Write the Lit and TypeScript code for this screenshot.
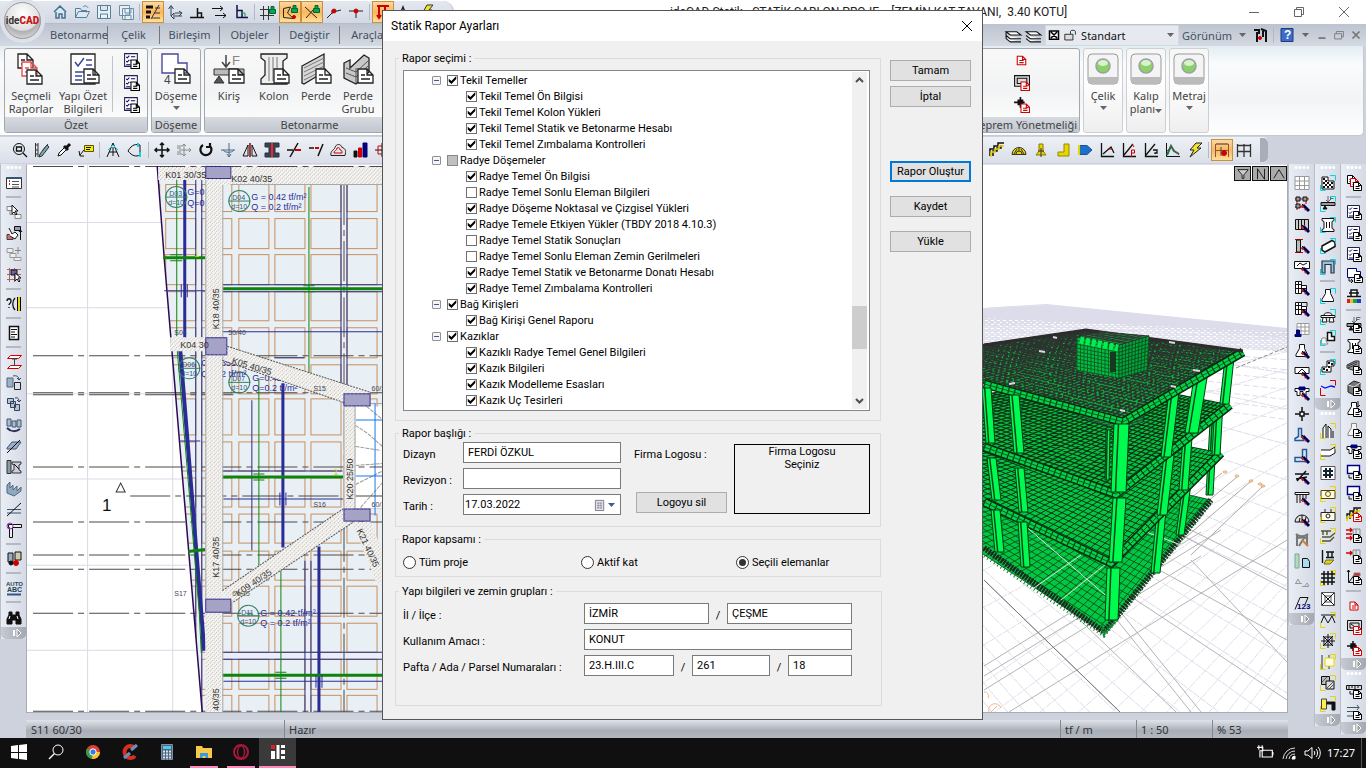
import { LitElement, html, svg, css } from "lit";
import { customElement, state } from "lit/decorators.js";
import { classMap } from "lit/directives/class-map.js";

type Part = unknown;

/* ---------- drawing helpers ---------- */
const P = (d: string, s = "#222", f = "none", w = 1): Part =>
  svg`<path d=${d} stroke=${s} fill=${f} stroke-width=${w}></path>`;
const C = (x: number, y: number, r: number, s = "#222", f = "none", w = 1): Part =>
  svg`<circle cx=${x} cy=${y} r=${r} stroke=${s} fill=${f} stroke-width=${w}></circle>`;
const T = (x: number, y: number, t: string, size: number, c = "#333", rot = 0, w = 400): Part =>
  svg`<text x=${x} y=${y} font-size=${size} fill=${c} font-weight=${w} font-family="Liberation Sans, sans-serif" transform=${`rotate(${rot} ${x} ${y})`}>${t}</text>`;

const glyph = (parts: Part, size = 16, box = 16) =>
  html`<svg class="glyph" width=${size} height=${size} viewBox=${`0 0 ${box} ${box}`} aria-hidden="true">${parts}</svg>`;

const page = (x: number, y: number, c = "#000", k = 1): Part =>
  P(`M${x} ${y}h${5 * k}l${3 * k} ${3 * k}v${5 * k}h${-8 * k}zM${x + 5 * k} ${y}v${3 * k}h${3 * k}M${x + 2 * k} ${y + 4 * k}h${4 * k}M${x + 2 * k} ${y + 6 * k}h${4 * k}`, c, "#fff");
const brush: Part = [P("M9 9l6 6", "#00007a", "none", 3), P("M7.5 9.5l2 2M11 13l1 1", "#c01818", "none", 2), P("M8 8l7 7", "#000")];
const corner = (c: string): Part => P("M10 .5h5.5v5M.5 10v5.5h5", c);
const tri = (c = "#666") => html`<svg class="tri" width="7" height="4" viewBox="0 0 7 4" aria-hidden="true"><path d="M0 0h7l-3.5 4z" fill=${c}></path></svg>`;

const K = "#00007a", B = "#111", G = "#888", R = "#d00000", Y = "#e8d400", CY = "#00d8e8";

/* ---------- quick access ---------- */
const quick: Record<string, Part> = {
  "Ana sayfa": [P("M2 8l6-6 6 6M4 8v6h3v-4h3v4h3V8", "#46708c", "#d8e8f2", 1.5)],
  "Aç": [P("M1.5 13.5v-9h5l1 2h5v2M1.5 13.5l3-6h11l-3 6zM9 3c2-2 4-1 5 1", "#54809c", "#dce9f2")],
  "Kaydet": [P("M1.5 1.5h13v13h-13zM4.500 1.500v5h7v-5M4.500 14v-4h7v4", "#54809c", "#e8f1f6")],
  "Tümünü kaydet": [P("M1.500 1.500h10v10h-10zM4.500 4.500h11v11h-11zM7 5v4h6v-4M7 15v-4h6v4", "#6c8fa8", "#e8f1f6")],
  "Çizgi": [P("M1 3h7M1 8h5M1 13h4", "#111", "none", 3), P("M14 1L6 15M10 4h5M9 9h6M7 14h8", "#333")],
  "Seçim": [P("M4 2v10M1.500 5L4 1.500 6.500 5M4 12l3-3v6zM8 9h7M8 12h7M12 7l3 2-3 3", "#345", "#cde")],
  "Dik": [P("M1 13.500h14M8.500 13V4M8.500 9h4v4", "#111", "none", 1.5)],
  "Paralel": [P("M1 4.500h10M4 11.500h11M9 2l3 2.500L9 7M12 9l3 2.500-3 2.500", "#111")],
  "Köşe": [P("M4 1v12.500h11M4 6.500h5v7", "#114", "none", 1.5), P("M8 9h4v4", "#00a050")],
  "Izgara": [P("M3.500 2v14M8.500 2v14M0 5.500h12M0 11.500h14", "#333"), P("M9.500 5.500h6v4h-6zM11 5V2.500h3V5", "#063", "#0a5")],
  "Kilit": [P("M1.500 4.500l7-1.500-3 6 6 5.500-10-1z", "#222"), P("M9.500 4.500h6v4h-6zM11 4V1.500h3V4", "#063", "#0a5"), C(12, 13, 1.5, R, R)],
  "Kesişim": [P("M1 3l12 11M2 14l8-9", "#222"), P("M9.500 4.500h6v4h-6zM11 4V1.500h3V4", "#063", "#0a5")],
  "Uç": [P("M1 14l6-6 8-2M6 6v4", "#222"), C(8, 7, 2, R, R)],
  "Orta": [P("M1 7h14M8 7v7", "#222"), C(8, 7, 2, R, R)],
  "Yük": [P("M2 2h12M4 2v12M10 2v10M2 11l2 3 2-3M8 9l2 3 2-3", R, "none", 2)],
  "Ölçü": [P("M2 13L6 3l4 10M4 9h4M11 12h4", "#222", "none", 1.5)],
  "Şimşek": [P("M8 1h6l-4 5h3L4 15l3-7H4z", "#333", "#f2e230")],
};

/* ---------- drawing toolbar ---------- */
const toolsLeft: (Part | null)[] = [
  [C(7, 7, 5.500, B), P("M4.500 5h5v4h-5zM11 11l4 4", B, "none", 1.3)],
  [P("M1.500 1v14M4 1v14M1 3h3M1 8h3M1 12h3M14 2L8 9", "#333"), P("M13 3L6 12l-1 3 3-1 7-9z", "#333", "#7aa")],
  [P("M2 14l1-3 6-6 2 2-6 6z", B, "#fff"), P("M8 4l4 4M10 6l4-4", B, "none", 3)],
  [P("M6.500 3.500h9v6h-9z", "#550", "#ffee00"), P("M6 8L2 13M1 9l1 5h4M8 5.500h5M8 7.500h4", B)],
  null,
  [P("M8 1L2 15M8 1l6 14M4 10h8M8 5v9", B), P("M3 8l5-5 5 5", CY)],
  [P("M1 9C5 2 9 2 13 3M1 9c4 5 8 6 12 4M13 3v10", B), P("M11 1v4M13 10v5", CY, "none", 2)],
  null,
  [P("M8 1v14M1 8h14M6 3l2-2 2 2M6 13l2 2 2-2M3 6L1 8l2 2M13 6l2 2-2 2", B, "none", 1.5)],
  [P("M8 2v12M3 8h12M6 4l2-2 2 2M6 12l2 2 2-2M13 6l2 2-2 2M1 4h5M1 6h4M1 10h4M1 12h5", G)],
  [P("M5 3a5.500 5.500 0 107 1M12 1v4H8", B, "none", 2.2)],
  [P("M1 8h14M9 1v14M3 8a6 4 0 0011 0M7 12l2 3 2-3", "#4a6a86")],
  [P("M8 1v14M6 3v11H1zM10 3v11h5z", B), P("M8 1v14", R)],
  [P("M1 1h14v4h-4v6h4v4H1v-4h4V5H1z", "#234", "#345"), P("M8 1v14", "#ff2020", "none", 2)],
  [P("M1 8h6M4 15L12 1", B, "none", 1.5), P("M9 8h6", R, "none", 2)],
  [P("M1 6h5M10 14L15 2", B, "none", 1.5), P("M7 6h4", R, "none", 2)],
  [P("M1 13.500c-1-5 3-5 4-8 1-4 6-4 7 0 4 1 4 4 3 8z", "#222"), P("M4 11c0-3 3-2 3-5 2-1 3 0 3 2 2 0 2 1 2 3z", R)],
  [P("M2 9h3v6H2z", B, B), P("M6.500 6h3v9h-3z", R, R), P("M11 1h4v14h-4z", K, K)],
  [P("M1 8h14M8 1v14", B), P("M4 4h8v8H4z", R)],
];
const toolsRight: (Part | null)[] = [
  [P("M1 14V7h4V4h4V1h6M4 14V9h4V6h4V3", "#111", "none", 1.5), P("M2 15v-5h4V7h4V4h5", Y, "none", 1.5)],
  [P("M1 12.500a7 7 0 0114 0z", "#333", Y), P("M5 12a3 3 0 016 0M3 12l3-5M8 5v4M13 12l-3-5", "#333")],
  [P("M6 2h4v7l3 4H3l3-4z", "#887700", Y), P("M8 6v9M5 9h6", "#333")],
  [P("M9 2h5v12H3v-4h6z", "#998800", Y)],
  [P("M2 3.500h8l5 4.500-5 4.500H2z", "#1850a0", "#1c70c8"), P("M2 3v10", Y, "none", 2)],
  [P("M2.500 1v13.500H15M4 12L12 5l3 6", B, "none", 1.3), P("M9 7h4", R)],
  [P("M2.500 1v13.500H15M3 13L12 2", B, "none", 1.3), P("M11 2l2 3M10.500 15V8h3v3h-3", R)],
  [P("M2.500 1v13.500H15M3 13L12 2M10 8h4v3h-2v1M12 14v1", B, "none", 1.3)],
  [P("M1.500 1v13.500H15", B), P("M2 13l4-9 3 5 5 3", "#0a7a50", "none", 2), P("M2 9l4-4 8 8", "#b03030")],
  [P("M9 1h6l-5 5h4L3 15l4-7H3z", "#222", "#f2e230")],
  null,
  [P("M1.500 2v13M14.500 2v13M1 8.500h14", "#854"), P("M2 2h12", "#333", "none", 1), C(10, 11, 2.500, R, R), P("M7 5v9", "#444")],
  [P("M1.500 2v13M14.500 2v13M8 2v13M1 3.500h14M1 9.500h14", "#333", "none", 1.3)],
];

/* ---------- vertical toolbars ---------- */
const SEP = null, CAP = "cap", GRIP = "grip";
type Item = Part | null | "cap" | "grip";
const table: Part = P("M1.500 1.500h6v12h-6zM7.500 5.500h5v6h-5M1 4.500h7M1 8.500h12M4.500 1v13", B, "#fff");
const foot: Part = P("M5.500 1.500h5v4l3 6v2H2v-2l3.500-6z", B, "#fff");
const slab: Part = [P("M1 3.500h14v3H12v4h-3v-4H6v4H3v-4H1z", B, "#fff"), P("M5 2h6v3H5z", K, K)];
const list: Part = [P("M1.500 1.500h12v12h-12z", "#224", "#fff"), P("M3 4.500l1 1 2-2M7.500 4.500h4M3 8.500l1 1 2-2M7 8h4M3 12h4", K)];
const check: Part = [P("M2 10V2h6v4h6v8H2z", B, "#fff"), P("M3 3h2v2H3zM5 5h2v2H5zM3 7h2v2H3zM7 7h2v2H7zM5 9h2v2H5zM9 9h2v2H9zM11 7h2v2h-2zM7 11h2v2H7zM3 11h2v2H3zM11 11h2v2h-2z", "none", B)];
const beamF: Part = [P("M8 0v6M6 4l2 2 2-2M10.500 4V.5h4M10.500 2.500h3", "#666"), P("M1 6.500h14v3H1z", B, "#999"), P("M3 13l2-3 2 3z", B, B)];
const colI: Part = P("M2 1.500h12v2l-2 1v7l2 1v2H2v-2l2-1v-7l-2-1zM6.500 5v6M9.500 5v6", B, "#fff");

const colLeft: Item[] = [
  [P("M.5 2.500h15v11H.5z", "#333", "#fff"), P("M1 3h14", "#357", "none", 2), P("M6 6.500h7M6 9.500h7M6 12h7", "#555"), P("M3 6h1M3 9h1", "#d22", "none", 2)],
  SEP,
  [P("M1 2.500h6v4H1zM4 6.500h6v4H4zM9 10.500h6v4H9z", G, "#f4f4f4"), P("M6 1v9l2-2 2 3 1-1-2-3h3z", B, "#fff")],
  [P("M8.500 1.500h6v4h-6z", B, "#99b"), P("M1 9.500h6v5H1z", "#533", "#b77"), P("M3 3l3 6 3-2 3 3-3 4-5-3", B, "#fff"), P("M14.500 5v10M13 7l1.500-2L16 7", B)],
  [P("M1 2.500h6v4H1zM4 7.500h6v4H4zM8 11.500h7v3H8z", "#999", "#eee"), P("M12 1v7M9 4.500h6", "#888")],
  [P("M1 2.500h14M1 7.500h14M1 12.500h10M3.500 1v14M8.500 1v14", "#a66"), P("M5 3h6v5H5z", B, "#66a"), P("M9 6v8l2-2 2 3 1-1-2-3h3z", B, "#fff")],
  SEP,
  [P("M1 5c0-3 4-3 4 0s-2 2-2 4M3 11v1M9 2c-3 3-3 9 0 12", B, "none", 1.3), P("M13 1v14", "#000", "none", 4), P("M13 1v14", Y, "none", 2)],
  SEP,
  [P("M3.500 1.500h9v13h-9z", B, "#fff", 1.5), P("M5 4.500h6M5 7h4M5 9.500h6M5 12h4", B)],
  SEP,
  [P("M4.500 1.500h11l-3 3h-11zM4.500 11.500h11l-3 3h-11z", R, "#fff"), P("M8.500 4v8M6.500 6l2-2 2 2", "#345")],
  [P("M1 3h6v9H1z", "#567", "#9bb0cc"), P("M8.500 7.500h6v7h-6z", "#222"), P("M7 1c4-1 6 1 6 4M11 3l2 2 2-2", "#346")],
  [P("M1.500 2.500h6v5h-6zM4.500 5.500h5v6h-5zM8.500 8.500h5v6h-5z", "#345", "#b4c4dc"), P("M9 2c3-1 4 1 4 4M11 4l2 2 2-2", "#346")],
  [P("M1 2h4v7H1zM6 4h4v6H6zM11 3h4v7h-4z", "#456", "#a8bcd6"), P("M1 11c4 4 9 4 13 1", "#235", "none", 2)],
  [P("M1 10l5-6h9l-5 7H1z", "#456", "#9bb0cc"), P("M1 15L14 2", B)],
  [P("M1 1.500h4v13H1z", "#333", "#89a"), P("M6 3h9v2l-2 1v5l2 1v2H6v-2l2-1V6L6 5z", "#333", "#ccd"), P("M8 5l5 5", B)],
  [P("M1 5l3-3v6l3-3v5l4-4v5l4-4v4l-7 5-7-3z", "#567", "#8ea8c0")],
  [P("M1 8.500h14M1 12h14", "#357"), P("M1 15L15 2", B)],
  [P("M2.500 2.500h13v3h-9v10h-3v-10h-1z", B, "#eee"), C(4, 4, 3, "#93b")],
  SEP,
  [P("M2 2h5v9H2z", B, "#9ab"), P("M9 1h6v8H9z", B, "#cca"), C(10, 12, 2.500, R, R), C(5, 12, 2, B, B)],
  SEP,
  [T(0, 6, "AUTO", 6, "#245", 0, 700), T(1, 12, "ABC", 7, "#245", 0, 700), P("M1 14.500h14", "#358", "none", 2)],
  SEP,
  [P("M3 3h3v3h4V3h3v3l2 4v5h-5v-4H6v4H1v-5l2-4z", B, B), P("M4 7L3 10M11 7l1 3", "#fff")],
  CAP,
];
const colA: Item[] = [
  P("M1 1.500h14v13H1zM1 6h14M1 10.500h14M5.500 1v14M10.500 1v14", "#999", "#fff"),
  [P("M1 3h14M1 11h8M3 1v13M12 1v7", R), P("M2 1h4v4H2zM9 1h4v4H9zM2 8h4v4H2z", B, "#999"), brush],
  [P("M1.500 2.500h13v10h-13z", B, "#ccc"), P("M4.500 3v9M7.500 3v9M10.500 3v5", B), brush],
  [P("M1 1.500h8M1 14.500h8", R), P("M2.500 2v12h4V2z", B, "#bbb"), brush],
  [P("M.5 2.500h15v7H.5z", B, "#fff"), P("M3 7l3-3 3 2 4-2", B), brush],
  [table, brush],
  [table, P("M8 1.500h5v4", B), brush],
  [P("M3 1.500h12v11H3zM3 5h12M3 9h12M7 1v12M11 1v12", "#999", "#fff"), P("M1 14.500v-2h1.500V8h3v4.500H7v2z", K, K)],
  [foot, brush],
  [P("M1 3.500h14v6H1z", B, "#fff"), P("M4 9l4-4 4 4", B), brush],
  [slab, brush],
  [P("M8 1v5M8 10v5M1 8h5M10 8h5M6 6h4v4H6z", B, "#fff", 1.5)],
  [P("M4.500 1.500h3v8l2 2v2H1v-2l3.500-2z", "#245a9a", "#dce8f6", 1.5), brush],
  [P("M8.500 1.500h4v12H1v-4h7.500z", "#245a9a", "#dce8f6", 1.5), brush],
  [P("M1 5h14M3 12L12 2M2 10l11-2", B, "none", 1.5), brush],
  [P("M1 2.500h14v2H1zM3 4v9M6 4v9M9 4v7M12 4v5", B, "#fff"), brush],
  [P("M1 11a7 7 0 0114 0zM5 11l1-4M8 10V4M11 11l1-5", B, "#ddd"), brush],
  [P("M2 2c3 3 9 3 12 0M2 7c3-2 9-2 12 0M3 2v12M13 2v12M5 14l5-8", "#777", "none", 2), P("M8 8l6 6", "#d08030", "none", 2)],
  [P("M1 1h4v14H1z", "#7a9", "#b8d8bc"), P("M8.500 5.500h5l2 3v6h-7z", B, "#a8dcf4")],
  [P("M1 9.500h7M8 12.500h7M2 9l2-4 2 4M11 12l2-3 2 3", "#999")],
  [P("M1 14.500L6 2.500h8l-3 7", B), T(3, 14, "123", 8, K, 0, 700)],
  CAP,
];
const colB: Item[] = [
  [check, corner(CY)], [beamF, corner(CY)], [colI, corner(CY)],
  [P("M2 8l10-5.500 3 2v4L5 14l-3-2z", B, "#fff", 1.5), corner(CY)],
  [P("M2 14V2h12v12h-3V5.500H5V14z", "#234", "#9cc0dc", 1.2), corner(CY)],
  SEP,
  [foot, corner(CY)],
  [P("M1 6.500h14v2H1zM4 6c0-3 8-3 8 0M3 9l-1 4h5l-1-4M10 9l-1 4h5l-1-4", B, "#fff"), corner(CY)],
  [P("M2 8h4v3l2 3H1z", G, "#fff"), P("M7.500 2.500h4v4h3v4h-7z", B, "#fff", 1.500), corner(CY)],
  SEP,
  [P("M2 8h5V2h7v5h-3v6H2z", B, "#fff"), P("M3 9h2v2H3zM8 3h2v2H8zM11 4h2v2h-2zM6 10h2v2H6zM8 7h2v2H8z", "none", B), corner(CY)],
  [P("M1 6l4 2 6-2 4 1", "#0010ff", "none", 1.3), P("M10 .5h5.500v5M.5 8v7.500h5", R)],
  CAP, GRIP,
  [P("M3 15V5l3-4v14M8 15V3l3 3v9M13 15V8", B, "#fff"), corner(Y)],
  [P("M1 6h9l5-3v6l-5 3H1", B, "#fff"), corner(Y)],
  [P("M1 1.500h14v13H1z", "#555", "#fff"), P("M6 3v10M10 3v10M3 6h10M3 10h10", "#123", "none", 2)],
  [P("M1 4.500h14v8H1z", "#554400", "#fffbe0"), C(8, 8, 2.500, "#665500"), corner(Y)],
  [P("M1 5.500h14v8H1zM5 5V2M11 5V2", "#222", "#fffbe0"), C(8, 9, 2, "#222"), corner(Y)],
  [P("M1 3h10M3 3v4M7 3v4M2 9h8l5-4M2 13h8l4-4", "#553", "none", 1.4), corner(Y)],
  [P("M2.500 1v13M6 3h8M8 3v5M12 3v5M6 8.500h8", B, "none", 1.4), P("M6 11h8l-4 4H4z", "#664", Y)],
  [P("M1 4h14M1 8h14M1 12h14M4 1v14M8 1v14M12 1v14", B, "none", 1.5), corner(Y)],
  [P("M1.500 1.500h13v13h-13zM5 5h6v6H5z", "#555", "#fff"), P("M2 2l12 12M14 2L2 14", B)],
  [P("M1 11l3-7 4 7 4-7 3 7M1 3h14", B), corner(Y)],
  [P("M1 8h14M8 1v14M3 3l10 10M13 3L3 13M4 4h8v8H4z", B), corner(Y)],
  [P("M2 1v14M9 1v3M9 12v3", "#333"), P("M5 4h9v8H5z", Y, "#ffffe8"), corner(Y)],
  [P("M1.500 1.500h8v8h-8z", B, "#bbb"), P("M6 6h8v8H6z", B, "#ddd"), P("M2 7l5-5M7 13l6-6M9 14l5-5", "#555"), corner(Y)],
  [P("M1.500 3h5v10h-5z", "#443", "#ffee50"), P("M7 6h8v8h-3V8H7z", B, B), corner(Y)],
  CAP,
];
const colC: Item[] = [
  [page(1.500, 0.500), page(4.500, 3.500, R), page(7.500, 7.500)],
  SEP,
  [list, page(7.500, 7.500)], [list, page(7.500, 7.500)], [list, page(7.500, 7.500)],
  [P("M1.500 1.500h9v3h4v6H1.500z", K, "#fff"), P("M3 11v3h3M5 12l2 2-2 2", B), page(8.500, 7.500)],
  [P("M1 8.500h14M5 8V2h6v6M3 5h10", B, "#fff", 1.5), P("M1 13h3", "#e02020", "none", 4), P("M4 13h3", "#e8c020", "none", 4), P("M7 13h4", "#20a040", "none", 4), P("M11 13h4", "#2040c0", "none", 4)],
  SEP,
  [beamF, page(7.500, 7.500)], [colI, page(7.500, 7.500)],
  [P("M1 6l8-4h4v8l-4 2-8-3z", "#333", "#999"), P("M2 7l9-4M2 9l9-4", "#333"), page(7.500, 7.500)],
  [P("M2 5l6-4 6 2v9l-6 3-6-3z", "#222", "#777"), P("M2 5l6 2 6-4M8 7v7", "#ddd"), page(7.500, 7.500)],
  [foot, P("M12 0v6M10 4l2 2 2-2", B), page(7.500, 7.500)],
  [P("M5.500 1.500h5v4l3 6v2H2v-2l3.500-6z", G, "#f4f4f4"), page(7.500, 7.500)],
  [slab, page(7.500, 7.500)],
  [P("M1.500 1.500h12v8h-12z", K, "#fff", 1.4), P("M3 11v3h3", B), page(7.500, 7.500)],
  [P("M1.500 1.500h12v8h-12z", K, "#fff", 1.4), P("M3 11v3h3", B), page(7.500, 7.500)],
  [P("M1 13V8h3V5h4V2h7M4 13V9h3V6h4V3", B, "none", 1.4), P("M1 15v-4h4V8h4V5h5", Y, "none", 1.500), page(7.500, 7.500, R)],
  [P("M7 2h7v8H7zM10 2v8", G), P("M0 3h6M0 7h6M0 11h6M4 1l2 2-2 2M4 9l2 2-2 2", R, "none", 1.300), page(7.500, 7.500)],
  [P("M7 2h7v8H7zM10 2v8", G), P("M0 5h6M4 3l2 2-2 2", R, "none", 1.300), page(7.500, 7.500)],
  [P("M2.500 1v12.500H15M3 13l6-8M1 3l1.500-2L4 3", B), P("M8 4h6v3H8z", "#d06060", "#844"), page(7.500, 7.500)],
  SEP,
  [page(4, 4, R)],
  [P("M1.500 1.500h14v10h-14zM4 4h9v5H4z", B, "#ddd"), P("M5 5l4 3", B), page(7.500, 7.500, R)],
  [P("M7 1v10M1 6h10M5 4h4v4H5z", B, B, 1.500), page(7.500, 7.500, R)],
  CAP, GRIP,
  [P("M.5 2.500h15v4H.5zM3 3v3M6 3v2M9 3v3M12 3v2", B, "#ddd"), P("M4 8v3h3", B), page(7.500, 7.500)],
  [P("M1 3.500h12M1 7.500h10M1 12h6M11 1l2 2.500L11 6", "#456"), page(7.500, 7.500)],
  CAP,
];

/* ---------- ribbon pictures, 32 units ---------- */
const bigPage = (x: number, y: number, c = "#222") =>
  P(`M${x} ${y}h9l6 6v8h-15zM${x + 9} ${y}v6h6M${x + 3} ${y + 6}h4M${x + 3} ${y + 10}h9`, c, "#fff", 1.3);
const big = {
  sec: [bigPage(3, 1), bigPage(7, 9, "#e84848"), bigPage(12, 17)],
  ozet: [P("M4 1h24v30H4z", "#222", "#fff", 1.3), P("M8 9l3 4 6-8M8 19h9M8 23h7M8 27h7M19 7h6M19 12h6", "#3a4a9a", "none", 1.500), bigPage(17, 16)],
  doseme: [P("M2 1h16v9h9v10H2z", "#4a4a9a", "#fff", 1.4), T(4, 31, "4", 12, "#444"), bigPage(15, 16)],
  kiris: [P("M13 2v12M9 9l4 5 4-5", "#444", "none", 1.500), T(19, 12, "F", 13, "#888"), P("M1 16h30v6H1z", "#333", "#bbb"), P("M1 30h10l-5-7z", "#333", "#555"), bigPage(16, 16)],
  kolon: [P("M3 1h26v4l-4 3v14l4 4v5H3v-5l4-4V8L3 5z", "#222", "#eee", 1.3), P("M11 4v24M15 4v24M19 4v24", "#777"), bigPage(16, 16)],
  perde: [P("M2 13L24 1v18L4 31l-2-1z", "#222", "#d8d8d8", 1.3), P("M4 15L24 5M4 19L24 9M4 23L24 13M4 27L24 17", "#777"), bigPage(16, 16)],
  grup: [P("M2 10l6-3v8l14-13 5 3v14L14 31 2 25z", "#222", "#c8c8c8", 1.3), P("M4 15l10 4 12-11M4 20l10 4 12-11M14 15v15", "#555"), bigPage(16, 16)],
};

/* ---------- plan view ---------- */
const line = (d: string, c: string, w = 1, dash = "") =>
  svg`<path d=${d} stroke=${c} stroke-width=${w} stroke-dasharray=${dash} fill="none"></path>`;

function plan() {
  const navy = "#2b2b96", or = "#c98f5c", gr = "#0d840d";
  const xs = [[130, 159], [165, 195], [201, 231], [238, 268], [274, 304], [310, 340], [346, 376], [382, 412]];
  const ys = [[184, 211], [218, 248], [254, 284], [291, 320], [327, 357], [364, 393], [398, 434], [441, 470], [477, 506], [513, 542], [550, 579], [585, 615], [622, 651], [658, 688], [694, 724]];
  const cells = xs.flatMap(([a, b]) => ys.map(([c, d]) => svg`<rect x=${a + 0.5} y=${c + 0.5} width=${b - a} height=${d - c} stroke=${or} fill="none"></rect>`));
  const disc = (x: number, y: number, n: string) => [
    C(x, y, 10.500, "#2d8068"), line(`M${x - 11} ${y}h22`, "#2d8068"),
    T(x - 7, y - 1, n, 7, "#2b5a80"), T(x - 8, y + 8, "d=10", 7, "#2b5a80"),
  ];
  const load = (x: number, y: number) => [T(x, y, "G = 0.42 tf/m²", 9, navy), T(x, y + 10, "Q = 0.2 tf/m²", 9, navy)];
  const col = (x: number, y: number, w: number, h: number) => svg`
    <rect x=${x} y=${y} width=${w} height=${h} fill="#a3a1cd" stroke="#2b2488"></rect>
    <rect x=${x} y=${y} width=${w} height=${h} fill="url(#hatch)"></rect>`;
  const band = (d: string) => svg`<path d=${d} fill="#f7f6f4"></path><path d=${d} fill="url(#hatch)"></path>`;
  return svg`
    <defs>
      <pattern id="hatch" width="4" height="4" patternUnits="userSpaceOnUse"><path d="M0 4L4 0" stroke="#b0aca4" stroke-dasharray="1 1"></path></pattern>
      <clipPath id="slab"><path d="M157 166H700V713H202L180 450z"></path></clipPath>
    </defs>
    ${line("M87.500 165v550M172.500 165v550M27 222.500h200M27 307.500h200M27 393.500h200M27 478.500h200M27 564.500h200M27 649.500h200", "#dadae8")}
    <g clip-path="url(#slab)">
      <path d="M150 165H700V713H150z" fill="#e8f0f6"></path>
      ${cells}
      ${line("M195.500 180v530M201.500 180v530M340.500 184v210M346.500 184v210M222 284.500h161M222 291.500h161M274 357.500h30M251.500 400v150M304.500 560v152M310.500 560v152M222 651.500h161M222 658.500h161M222 470.500h120", "#2a2a80")}
    </g>
    ${line("M354 403h29v105h-29z", "#aaa")}
    <path d="M355 406h30v102h-30z" fill="#fff"></path>
    ${line("M355 425l12 8 16 14M355 446l25 4M355 465l28-2M355 484l28-14M360 507l23-26M366 406l17 14", "#999", 1, "4 1")}
    ${line("M374.500 403v112M355 419.500h28M355 475.500h28", "#1878f0")}
    ${line("M33 166.500h350M33 355.500h350M33 392.500h350M33 394.500h200M33 466.500h350M130 495.500h253M33 521.500h350M33 554.500h350M33 568.500h350M33 612.500h350M33 710.500h350M343.500 185v530", "#4a4a4a", 1, "40 5 6 5")}
    ${line("M157 166L164 258 180 450 202 712", "#2c0a55", 1.500)}
    ${line("M184.500 180v158M282.500 383v164M318.500 546v166", navy, 3)}
    ${line("M180 350L204 650", navy, 4)}
    ${line("M177 350l22 262 2 40M176.500 180v156M308.500 187v186M258.500 378v187M280.500 568v144", gr)}
    ${line("M163 257.500h42M222 288.500h161M222 476.500h121M222 674.500h161M188 551l17-2", gr, 3)}
    ${line("M170 254.500h12M170 260.500h12M303 285.500h11M303 291.500h11M253 473.500h11M253 479.500h11M275 671.500h11M275 677.500h11", gr)}
    ${line("M164 290.500h41M222 331.500h161M223 498.500h120M223 680.500h160M180 440.500h20M181 284v13M187 284v13M279.500 492v13M285.500 492v13M315.500 674v13M321.500 674v13", navy)}
    ${disc(176, 197, "D03")}${disc(239, 201, "D04")}${disc(189, 368, "D06")}${disc(239, 382, "D07")}${disc(248, 615, "D11")}
    ${T(187, 195, "G=0", 9, navy)}${T(187, 206, "Q=0", 9, navy)}
    ${load(251, 200)}${T(201, 366, "G=0.351", 9, navy)}${T(201, 377, "Q=0.2 tf/m²", 9, navy)}
    ${T(252, 381, "G=0.42", 9, navy)}${T(252, 391, "Q=0.2 tf/m²", 9, navy)}${load(260, 615)}
    ${band("M158 167h47v13h-47zM205 165h17v550h-17zM230 167h170v18H230zM222 180h60v5h-60zM170 337h35v14h-35z")}
    ${band("M222 345L370 392 343 402 222 360zM343 406h12v102h-12zM343 508L352 522 232 602 222 590zM352 522L370 521 400 598 375 580z")}
    ${line("M205.500 180v157M222.500 185v152M205.500 356v242M222.500 356v234M222.500 612v100M230 184.500h153M343.500 406v102M354.500 406v102", "#aaa8a4")}
    ${line("M227 346L370 392M222 360L343 402M343 508L222 590M352 522L232 602", "#555", 1, "2 1")}
    ${col(205.500, 166.500, 25, 12)}${col(205.500, 337.500, 21, 17)}${col(343.500, 393.500, 26, 12)}${col(343.500, 508.500, 26, 12)}${col(205.500, 598.500, 25, 13)}
    ${T(165, 178, "K01 30/35", 9)}${T(231, 182, "K02 40/35", 9)}${T(180, 348, "K04 30", 9)}
    ${T(219, 329, "K18 40/35", 9, "#333", -90)}${T(219, 577, "K17 40/35", 9, "#333", -90)}${T(219, 710, "40/35", 9, "#333", -90)}${T(352, 499, "K20 25/50", 9, "#333", -90)}
    ${T(231, 363, "K05 40/35", 9, "#333", 17)}${T(238, 596, "K09 40/35", 9, "#333", -34)}${T(356, 530, "K21 40/35", 9, "#333", 65)}
    ${T(174, 335, "S04", 7, "#445")}${T(228, 335, "50/40", 7, "#445")}${T(313, 391, "S15", 7, "#445")}${T(313, 506, "S16", 7, "#445")}
    ${T(174, 595, "S17", 7, "#445")}${T(371, 391, "60/30", 7, "#445")}${T(371, 506, "60/30", 7, "#445")}${T(232, 595, "60/35", 7, "#664")}
    ${T(333, 475, "1", 9, "#c8d800")}${T(194, 257, "1", 9, "#c8d800")}
    ${T(102, 510, "1", 17, "#111")}
    ${line("M116 491.500h9l-4.500-9z", "#333")}`;
}

/* ---------- perspective view ---------- */
type Pt = [number, number];
const mix = (a: Pt, b: Pt, t: number): Pt => [a[0] + (b[0] - a[0]) * t, a[1] + (b[1] - a[1]) * t];
const poly = (q: Pt[]) => "M" + q.map((p) => p[0].toFixed(1) + " " + p[1].toFixed(1)).join("L") + "z";
function mesh(q: Pt[], nx: number, ny: number, fill: string, stroke: string, w: number, dash = "") {
  let d = "";
  for (let i = 0; i <= nx; i++) {
    const a = mix(q[0], q[1], i / nx), b = mix(q[3], q[2], i / nx);
    d += `M${a[0].toFixed(1)} ${a[1].toFixed(1)}L${b[0].toFixed(1)} ${b[1].toFixed(1)}`;
  }
  for (let j = 0; j <= ny; j++) {
    const a = mix(q[0], q[3], j / ny), b = mix(q[1], q[2], j / ny);
    d += `M${a[0].toFixed(1)} ${a[1].toFixed(1)}L${b[0].toFixed(1)} ${b[1].toFixed(1)}`;
  }
  return [svg`<path d=${poly(q)} fill=${fill}></path>`, svg`<path d=${d} stroke=${stroke} stroke-width=${w} stroke-dasharray=${dash} fill="none"></path>`];
}
const beam = (pts: Pt[]) => {
  const d = "M" + pts.map((p) => p.join(" ")).join("L");
  return [line(d, "#062b10", 9), line(d, "#00d545", 6), line(d, "#06351a", 6, "1.2 5"), line(d, "#0b5a24", 1)];
};
const column = (a: Pt, b: Pt, w: number) => [
  svg`<path d=${poly([a, [a[0] + w, a[1]], [b[0] + w, b[1]], b])} fill="#00fb50" stroke="#043a16" stroke-width="1"></path>`,
  line(`M${a[0] + w * 0.3} ${a[1]}L${b[0] + w * 0.3} ${b[1]}`, "#06451c", 1.5),
];
function model() {
  let fanA = "", fanB = "";
  for (let i = 0; i < 24; i++) fanB += `M640 270L1600 ${(270 + 960 * (0.05 + i * 0.055)).toFixed(1)}`;
  for (let i = 0; i < 22; i++) fanA += `M1560 290L656 ${(290 + 904 * (0.03 + i * 0.065)).toFixed(1)}`;
  let far = "";
  for (let i = 0; i < 10; i++) far += `M983 ${316 + i * 7}L1290 ${330 + i * 10}`;
  const roof: Pt[] = [[890, 358], [1122, 422], [1242, 352], [1085, 330]];
  const f3: Pt[] = [[890, 414], [1115, 494], [1229, 405], [1080, 375]];
  const f2: Pt[] = [[890, 457], [1110, 563], [1220, 453], [1080, 425]];
  const f1: Pt[] = [[890, 494], [1103, 633], [1210, 500], [1080, 470]];
  return svg`
    <defs><clipPath id="ground"><path d="M656 313L983 308 1045 304 1290 328V720H656z"></path></clipPath>
      <pattern id="haze" width="6" height="4" patternUnits="userSpaceOnUse"><path d="M0 .5h3M3 2.500h2" stroke="#fff"></path></pattern></defs>
    <path d="M656 313L983 308 1045 304 1286 328V340L1100 326 656 340z" fill="#dcdcea"></path>
    <path d="M656 338L983 326 1100 324 1286 338V352L1100 340 656 352z" fill="#e4e4f0"></path>
    <path d="M983 318L1286 332V352H983z" fill="url(#haze)"></path>
    <g clip-path="url(#ground)">
      ${line(far, "#dedeea", 1, "6 3")}
      ${line(fanB, "#dcdcea", 1, "7 1")}${line(fanA, "#e0e0ec", 1, "7 1")}
      ${line("M983 580L1119 712M1180 535L1286 590M983 666L1200 532M983 676L1220 530M983 690L1200 556M1008 712L1286 540M1140 560L1286 640M1120 590L1286 700M1110 600L1200 712M1108 610L1190 712M1040 583L1175 712M1180 525L1286 578M1190 560L1286 662", "#b4b4b4")}
      ${line("M983 580L1119 712", "#777")}
      ${line("M1235 368L1286 347", "#888", 1, "4 2")}
      ${line("M1221 473L1150 530M1236 477L1160 540M1249 482L1170 550M1262 486L1190 555", "#aaa")}
    </g>
    ${[[1224, 472], [1236, 476], [1250, 481], [1259, 484], [1262, 486]].map(([x, y]) => svg`<ellipse cx=${x} cy=${y} rx="2" ry="1" fill="none" stroke="#e8a060"></ellipse>`)}
    ${line("M983 692a4 4 0 014 6M988 712a6 6 0 0112-4M990 712l6-6", "#f0b888")}
    ${mesh(f1, 36, 26, "#00c840", "#123c1e", 0.8)}
    ${line("M983 548L1103 632 1210 500", "#222", 6, "2 1")}
    ${line("M1000 505L1110 600M1080 555L1030 590M1060 600L1110 560M1060 500L1180 545", "#d8e8d8", 1)}
    ${line("M983 556l120 80 108-134", "#0b8a30", 3, "1 3")}
    ${column([1185, 462], [1175, 535], 8)}${column([1210, 405], [1205, 495], 7)}
    ${column([1160, 470], [1150, 573], 9)}
    ${mesh(f2, 36, 28, "#00c840", "#10301a", 1)}
    ${beam([[983, 502], [1110, 563], [1220, 453]])}
    ${column([1183, 425], [1178, 490], 9)}${column([1214, 403], [1211, 455], 8)}
    ${column([1163, 455], [1156, 515], 10)}
    ${mesh(f3, 38, 30, "#00c43e", "#123018", 1.2)}
    ${mesh([[1076, 415], [1118, 430], [1142, 422], [1142, 400]], 9, 5, "#129a3c", "#2a2a2a", 0.8)}
    ${beam([[983, 447], [1115, 494], [1229, 405]])}
    ${column([1224, 358], [1219, 404], 9)}${column([1193, 378], [1184, 433], 13)}
    ${column([1168, 392], [1160, 457], 10)}
    ${column([1105, 430], [1104, 480], 4)}
    ${mesh(roof, 46, 32, "#08b43c", "#2c322e", 1.6, "5 1 9 2")}
    ${beam([[983, 384], [1122, 422], [1242, 352]])}
    ${line("M983 345L1085 330 1242 351", "#2c2c2c", 3)}
    ${mesh([[1076, 337], [1118, 345], [1118, 378], [1076, 370]], 12, 9, "#00bd42", "#0e5a24", 0.9)}
    ${mesh([[1118, 345], [1148, 336], [1146, 370], [1118, 378]], 9, 9, "#00a63a", "#0e4a20", 0.9)}
    ${mesh([[1076, 337], [1118, 345], [1148, 336], [1100, 332]], 8, 4, "#1a8a38", "#333", 1)}
    ${line("M1079 340l38 8", "#00f050", 7, "4 2")}
    ${line("M1112 352v20", "#163a20", 6)}
    ${line("M1038 351l6 1M1052 337l4 1M1168 342l6 1M1192 370l7 1M1008 384l6-1M1170 386l5 1M1119 410l5 1", "#d8d8e0", 2)}
    ${column([981, 388], [985, 443], 9)}${column([1008, 395], [1013, 453], 10)}
    ${column([986, 458], [991, 500], 9)}${column([1014, 468], [1018, 512], 9)}
    ${column([990, 510], [994, 552], 9)}${column([1017, 522], [1020, 567], 9)}
    ${column([1113, 424], [1110, 492], 15)}${column([1112, 498], [1108, 562], 13)}${column([1106, 568], [1104, 620], 13)}
    ${line("M1100 622l3 12 8-9 6-6", "#0b8a30", 3, "2 1")}`;
}

/* ---------- report tree ---------- */
type Leaf = { name: string; on: boolean };
type Group = { name: string; mark: "on" | "mixed"; open: boolean; items: Leaf[] };
const leaf = (name: string, on = true): Leaf => ({ name, on });

@customElement("app-root")
export class AppRoot extends LitElement {
  @state() private groups: Group[] = [
    { name: "Tekil Temeller", mark: "on", open: true, items: [leaf("Tekil Temel Ön Bilgisi"), leaf("Tekil Temel Kolon Yükleri"), leaf("Tekil Temel Statik ve Betonarme Hesabı"), leaf("Tekil Temel Zımbalama Kontrolleri")] },
    { name: "Radye Döşemeler", mark: "mixed", open: true, items: [leaf("Radye Temel Ön Bilgisi"), leaf("Radye Temel Sonlu Eleman Bilgileri", false), leaf("Radye Döşeme Noktasal ve Çizgisel Yükleri"), leaf("Radye Temele Etkiyen Yükler (TBDY 2018 4.10.3)"), leaf("Radye Temel Statik Sonuçları", false), leaf("Radye Temel Sonlu Eleman Zemin Gerilmeleri", false), leaf("Radye Temel Statik ve Betonarme Donatı Hesabı"), leaf("Radye Temel Zımbalama Kontrolleri")] },
    { name: "Bağ Kirişleri", mark: "on", open: true, items: [leaf("Bağ Kirişi Genel Raporu")] },
    { name: "Kazıklar", mark: "on", open: true, items: [leaf("Kazıklı Radye Temel Genel Bilgileri"), leaf("Kazık Bilgileri"), leaf("Kazık Modelleme Esasları"), leaf("Kazık Uç Tesirleri")] },
  ];

  static styles = css`
    :host { display: block; font: 11px/13px "Noto Sans", sans-serif; color: #444; }
    * { box-sizing: border-box; }
    button { font: inherit; color: inherit; padding: 0; margin: 0; border: 0; background: none; }
    ul { list-style: none; margin: 0; padding: 0; }
    svg { display: block; flex: none; }
    .glyph { overflow: visible; }
    .screen { position: relative; display: flex; flex-direction: column; height: 100vh; overflow: hidden; background: #cdd2dc; }
    .iconbtn { display: grid; place-items: center; flex: none; width: 22px; height: 22px; }
    .iconbtn.on { border: 1px solid #c8923c; background: linear-gradient(#fbd9a0, #fbb65c 50%, #ffdf9a); }
    .vsep { flex: none; width: 1px; height: 16px; margin: 0 2px; background: #b4b8c2; }
    .tri { display: inline-block; }

    .titlebar { display: flex; align-items: center; flex: none; height: 24px; background: #fff; color: #222; font: 12px/16px Roboto, sans-serif; }
    .quick { display: flex; align-items: center; flex: none; height: 23px; width: 454px; padding-left: 49px; background: linear-gradient(#e4e8f0, #d2d8e4); border: 1px solid #b8bcc8; border-left: 0; border-top: 0; border-radius: 0 12px 12px 0; }
    .caption { flex: 1; text-align: center; white-space: pre; padding-left: 52px; }
    .winbtns { display: flex; flex: none; }
    .winbtns button { display: grid; place-items: center; width: 45px; height: 22px; }
    .orb { position: absolute; left: 4px; top: 2px; display: grid; place-items: center; width: 37px; height: 37px; border-radius: 50%; border: 1px solid #999; background: radial-gradient(circle at 50% 30%, #fff, #e0e0e0 55%, #b0b0b4 60%, #f0f0f0); box-shadow: 0 0 0 4px #dde1e9; font: 700 10px/12px Roboto, sans-serif; color: #333; }
    .orb b { color: #c81818; }

    .tabs { display: flex; align-items: center; flex: none; height: 22px; padding-left: 50px; background: linear-gradient(#bcc4d0, #d4d9e2); color: #445060; }
    .tabs nav { display: flex; flex: 1; overflow: hidden; }
    .tab { flex: none; width: 60px; text-align: center; color: inherit; text-decoration: none; border-right: 1px solid #777; line-height: 18px; }
    .tab.first { width: 58px; text-align: left; }
    .tab.short { width: 52px; }
    .tabtools { display: flex; align-items: center; gap: 3px; flex: none; padding-right: 3px; }
    .layer { display: flex; align-items: center; gap: 4px; width: 134px; height: 21px; padding: 0 4px 0 2px; border: 1px solid #d4d8e0; background: #e6e9f0; color: #111; }
    .layer select { flex: 1; min-width: 0; appearance: none; border: 0; background: none; padding: 0; font: inherit; color: inherit; }
    .mini { width: 14px; height: 14px; display: grid; place-items: center; }

    .ribbon { display: flex; justify-content: space-between; flex: none; height: 90px; margin-right: 2px; padding: 2px 2px 2px 4px; background: linear-gradient(#e2eef2, #fafbfc 20%, #f2f4f6 60%, #fff); border: 1px solid #c6cad2; border-left: 0; border-top: 0; border-radius: 0 0 5px 0; }
    .panels { display: flex; gap: 3px; flex: none; }
    .panel { display: flex; flex-direction: column; flex: none; border: 1px solid #a4a8ae; border-radius: 3px; background: linear-gradient(#f8f8f8, #f2f3f4 50%, #fff); overflow: hidden; }
    .panel h2 { margin: 0; flex: none; height: 15px; font: inherit; line-height: 15px; text-align: center; background: linear-gradient(#d6dae0, #c2c7d0); white-space: nowrap; }
    .panel.cut h2 { padding: 0 2px 0 20px; }
    .row { display: flex; flex: 1; min-height: 0; }
    .cut .row { justify-content: flex-end; }
    .cmd { display: flex; flex-direction: column; align-items: center; gap: 4px; padding-top: 4px; text-align: center; white-space: pre-line; }
    .w48 { width: 48px; } .w52 { width: 52px; } .w42 { width: 42px; }
    .rule { width: 1px; height: 56px; margin: 7px 3px 0; background: #c0c4c8; }
    .stack { display: flex; flex-direction: column; gap: 5px; padding: 3px 7px 0; }
    .led { display: flex; flex-direction: column; align-items: center; gap: 4px; width: 40px; border: 1px solid #ccd0d4; border-radius: 3px; padding-top: 4px; white-space: pre-line; text-align: center; background: linear-gradient(#f6f6f6, #fff 40%, #eee); }
    .filler { width: 149px; }

    .tools { display: flex; justify-content: space-between; align-items: center; flex: none; width: 1268px; max-width: 100%; height: 26px; margin: 1px 0; padding: 0 0 0 9px; border-radius: 0 5px 5px 0; background: linear-gradient(#eef1f6, #d9dee8); }
    .tools > div { display: flex; align-items: center; flex: none; }
    .more { width: 8px; height: 24px; margin-left: 5px; background: #a8adb8; border-radius: 0 5px 5px 0; }

    .body { display: flex; flex: 1; min-height: 0; }
    .bar { flex: none; width: 26px; background: linear-gradient(90deg, #e9edf5, #d5dae5); margin-bottom: auto; display: flex; flex-direction: column; align-items: center; border-left: 1px solid #b8bdc8; }
    .bar .iconbtn { height: 21px; }
    .bar .grip { height: 8px; width: 15px; flex: none; background: radial-gradient(circle, #fff 1px, transparent 2px) 0 0 / 4px 7px repeat-x; }
    .bar .grip.second { height: 10px; }
    .bar hr { width: 15px; height: 2px; margin: 3px 0; border: 0; background: #b4b8c0; flex: none; }
    .bar .cap { height: 12px; width: 100%; flex: none; background: linear-gradient(90deg, #c6cad2, #a4a8b0); border-radius: 0 0 5px 5px; display: flex; justify-content: flex-end; align-items: center; padding-right: 3px; }
    .center { flex: 1; display: flex; flex-direction: column; min-width: 0; }
    .views { position: relative; flex: 1; display: grid; grid-template-columns: 1fr 1fr; min-height: 0; background: #fff; border: 1px solid #a8acb6; border-top-color: #e0e0e8; }
    .views > svg { width: 100%; height: 100%; min-height: 0; }
    .filters { position: absolute; right: 0; top: 1px; display: flex; gap: 1px; }
    .filters button { display: grid; place-items: center; width: 17px; height: 15px; background: #aaa; border: 1px solid #111; }
    .status { flex: none; display: flex; height: 18px; margin-top: 7px; background: linear-gradient(#e0e3ea, #a8adb8 60%, #b4b8be); color: #333; line-height: 19px; }
    .status span { width: 76px; padding-left: 4px; border-left: 1px solid #888; }
    .status .sel { width: 258px; border: 0; padding-left: 5px; }
    .status .msg { flex: 1; }

    .taskbar { flex: none; display: flex; align-items: stretch; height: 30px; background: #101010; color: #fff; }
    .app { display: grid; place-items: center; width: 37px; border-bottom: 2px solid transparent; }
    .app.run { background: linear-gradient(#ff88bb, #ff88bb) center bottom / 28px 2px no-repeat; border: 0; padding-bottom: 2px; }
    .app.active { background: #3a3a3a; border-bottom: 2px solid #ff88bb; padding: 0; }
    .tray { display: flex; align-items: center; gap: 7px; margin-left: auto; padding-right: 4px; }
    .tray time { padding-right: 6px; border-right: 1px solid #555; line-height: 30px; }

    .dialog { position: absolute; left: calc(50% - 301px); top: 10px; width: 601px; border: 1px solid #555; background: #f0f0f0; color: #000; font: 11px/13px Roboto, sans-serif; }
    .dialog header { display: flex; justify-content: space-between; height: 30px; background: #fff; padding-left: 8px; }
    .dialog h1 { margin: 0; font: 12px/30px Roboto, sans-serif; }
    .close { display: grid; place-items: center; width: 31px; height: 30px; }
    .content { display: flex; gap: 9px; padding: 11px 11px 13px 12px; }
    .main { flex: 1; min-width: 0; display: flex; flex-direction: column; gap: 6px; }
    fieldset { margin: 0; border: 1px solid #dcdcdc; min-width: 0; padding: 5px 10px 9px 7px; }
    legend { padding: 0 3px; margin-left: -4px; line-height: 13px; }
    .tree { display: flex; height: 341px; border: 1px solid #828790; background: #fff; padding: 1px 2px 1px 0; }
    .tree > ul { flex: 1; overflow: hidden; }
    .node { display: flex; align-items: center; height: 16px; padding-left: 28px; }
    .kid { display: flex; align-items: center; height: 16px; padding-left: 62px; }
    .node label, .kid label { display: flex; align-items: center; gap: 2px; white-space: nowrap; }
    .expander { display: grid; place-items: center; width: 9px; height: 9px; margin-right: 6px; border: 1px solid #919191; border-radius: 1px; background: #f4f4f4; color: #3a5aa8; }
    input[type="checkbox"] { appearance: none; flex: none; width: 11px; height: 11px; margin: 0; border: 1px solid #707070; background: #fff; display: grid; place-items: center; }
    input[type="checkbox"]:checked::before { content: ""; width: 9px; height: 9px; background: #000; clip-path: polygon(8% 35%, 38% 62%, 92% 6%, 92% 38%, 38% 95%, 8% 66%); }
    input[type="checkbox"].mixed { background: #c0c0c0; border-color: #888; }
    .scroll { display: flex; flex-direction: column; justify-content: space-between; align-items: center; width: 15px; background: #f0f0f0; }
    .scroll button { display: grid; place-items: center; width: 15px; height: 17px; }
    .track { flex: 1; width: 100%; padding-top: 217px; }
    .thumb { height: 43px; background: #cdcdcd; }
    .heading { padding-top: 2px; padding-bottom: 11px; }
    .head { display: flex; align-items: flex-start; }
    .fields { display: grid; grid-template-columns: 60px 158px; row-gap: 5px; align-items: center; }
    .fields label, .sites label { padding-top: 3px; }
    input.text { width: 100%; min-width: 0; height: 21px; border: 1px solid #7a7a7a; background: #fff; font: inherit; color: #000; padding: 0 4px 1px; border-radius: 0; }
    .date { display: flex; align-items: center; gap: 2px; height: 21px; border: 1px solid #7a7a7a; background: #fff; padding-right: 5px; }
    .date input { flex: 1; min-width: 0; border: 0; background: none; font: inherit; color: #000; padding: 0 1px; font-size: 11px; }
    .push { height: 21px; background: #e1e1e1; border: 1px solid #adadad; color: #000; text-align: center; }
    .push.default { border: 2px solid #0078d7; }
    .logoctl { display: flex; flex-direction: column; justify-content: space-between; width: 93px; height: 71px; margin: 0 7px 0 13px; padding-top: 6px; }
    .logoctl .push { width: 91px; margin-left: 2px; }
    .logo { flex: 1; height: 70px; margin-top: 2px; border: 1px solid #000; text-align: center; padding: 0 28px; }
    .scope { display: flex; padding-top: 9px; padding-bottom: 7px; }
    .scope label { display: flex; align-items: center; gap: 3px; height: 14px; }
    .scope label:nth-of-type(1) { width: 178px; } .scope label:nth-of-type(2) { width: 155px; }
    input[type="radio"] { appearance: none; width: 13px; height: 13px; margin: 0; border: 1px solid #333; border-radius: 50%; background: #fff; display: grid; place-items: center; }
    input[type="radio"]:checked::before { content: ""; width: 7px; height: 7px; border-radius: 50%; background: #333; }
    .site { margin-top: 2px; padding-bottom: 29px; padding-right: 29px; margin-right: -1px; }
    .sites { display: grid; grid-template-columns: 181px 1fr; row-gap: 5px; align-items: center; }
    .split { display: flex; align-items: center; }
    .split > span { flex: none; width: 18px; text-align: center; padding-top: 4px; }
    .two > input { flex: 1; }
    .a92 { flex: 92; } .a78 { flex: 78; } .a62 { flex: 62; }
    .side { display: flex; flex-direction: column; width: 81px; gap: 14px; padding-top: 8px; }
    .pair { display: flex; flex-direction: column; gap: 5px; margin-bottom: 40px; }
  `;

  private toggleOpen(i: number) {
    this.groups = this.groups.map((g, n) => (n === i ? { ...g, open: !g.open } : g));
  }

  private button(p: Part, name: string, on = false) {
    return html`<button class=${classMap({ iconbtn: true, on })} aria-label=${name}>${glyph(p)}</button>`;
  }

  private strip(items: (Part | null)[], active = -1) {
    return items.map((p, i) => (p === null ? html`<span class="vsep"></span>` : this.button(p, `Araç ${i + 1}`, i === active)));
  }

  private bar(items: Item[], name: string) {
    return html`<div class="bar" role="toolbar" aria-label=${name}>
      <span class="grip"></span>
      ${items.map((p, i) =>
        p === null ? html`<hr />`
        : p === "cap" ? html`<span class="cap">${glyph([P("M1 2v6", "#fff", "none", 2), P("M4 1l4 4-4 4z", "#fff", "#999")], 10, 10)}</span>`
        : p === "grip" ? html`<span class="grip second"></span>`
        : this.button(p, `${name} ${i + 1}`))}
    </div>`;
  }

  private top() {
    const names = Object.keys(quick);
    const active = ["Çizgi", "Kilit", "Kesişim", "Yük"];
    const before = ["Çizgi", "Izgara", "Yük"];
    return html`
      <div class="titlebar">
        <div class="quick">
          ${names.map((n) => html`${before.includes(n) ? html`<span class="vsep"></span>` : ""}${this.button(quick[n], n, active.includes(n))}`)}
          ${tri()}
        </div>
        <div class="caption">ideCAD Statik - STATİK ŞABLON PROJE -  [ZEMİN KAT TAVANI,  3.40 KOTU]</div>
        <div class="winbtns">
          <button aria-label="Simge durumuna küçült">${glyph(P("M3 8.500h10", "#666"))}</button>
          <button aria-label="Önceki boyut">${glyph(P("M3.500 5.500h7v7h-7zM5.500 5V3.500h7v7H11", "#666"))}</button>
          <button aria-label="Kapat">${glyph(P("M3 3l10 10M13 3L3 13", "#666"))}</button>
        </div>
      </div>
      <div class="tabs">
        <nav aria-label="Şerit">
          <a class="tab first" href="#betonarme">Betonarme</a>
          <a class="tab short" href="#celik">Çelik</a>
          ${["Birleşim", "Objeler", "Değiştir", "Araçlar"].map((t) => html`<a class="tab" href=${"#" + t}>${t}</a>`)}
        </nav>
        <div class="tabtools">
          ${glyph(P("M1 4.500h10l4 3H5zM1 8l4 3h10M1 11l4 3h10M1 4v7", B, "#fff"), 17)}
          ${glyph(P("M1 4.500h10l4 3H5zM1 8l4 3h10M1 11l4 3h10", B, "#fff"), 17)}
          <div class="layer">
            ${glyph(P("M2 2.500h12v11H2zM4 4l8 8M12 4l-8 8", "#000", "#fff", 2), 12)}
            ${glyph([P("M1 6.500h10v7H1z", B, "#ddd"), P("M8 6V3c0-2 6-2 6 0v4", B)], 13)}
            <select aria-label="Katman"><option>Standart</option></select>
            ${tri()}
          </div>
          <span>Görünüm</span> <span class="mini">${tri()}</span>
          ${glyph([P("M2 3h5v3H4M5 5v10M9 2l5 2v11M11 4v6", B, "none", 2), C(8, 11, 1.500, R, R)])}
          <span class="vsep"></span>
          ${glyph([P("M2 1.500h12v13H2z", "#1c3c80", "#3c6cc8"), T(5, 12, "?", 12, "#fff", 0, 700)])}
          <span class="mini">${tri()}</span>
          ${glyph(P("M4 11.500h8", "#777", "none", 2), 14)}
          ${glyph(P("M3 6.500h8v6H3zM5 6V4h8v6h-2", "#777"), 14)}
          ${glyph(P("M4 4l8 8M12 4l-8 8", "#777", "none", 2), 14)}
        </div>
      </div>
      <div class="orb"><span>ide<b>CAD</b></span></div>`;
  }

  private led(text: string, arrow: boolean) {
    return html`<button class="led">
      <svg width="32" height="32" viewBox="0 0 32 32" aria-hidden="true">
        <rect x="1" y="1" width="30" height="30" rx="4" fill="#f4f4f4" stroke="#999"></rect>
        <path d="M1 24h30v3a4 4 0 01-4 4H5a4 4 0 01-4-4z" fill="#bbb"></path>
        <circle cx="16" cy="13" r="7" fill="#8cd068" stroke="#9aa0a8" stroke-width="1.500"></circle>
        <ellipse cx="16" cy="10" rx="5" ry="3" fill="#d8f2cc"></ellipse>
      </svg>
      <span>${text}${arrow ? tri() : ""}</span>${arrow ? "" : tri()}
    </button>`;
  }

  private ribbon() {
    return html`<div class="ribbon">
      <div class="panels">
        <section class="panel">
          <div class="row">
            <button class="cmd w52">${glyph(big.sec, 32, 32)}<span>${"Seçmeli\nRaporlar"}</span></button>
            <button class="cmd w52">${glyph(big.ozet, 32, 32)}<span>${"Yapı Özet\nBilgileri"}</span></button>
            <span class="rule"></span>
            <div class="stack">${[1, 2, 3].map(() => glyph([list, page(7.500, 7.500)], 17))}</div>
          </div>
          <h2>Özet</h2>
        </section>
        <section class="panel">
          <div class="row"><button class="cmd w48">${glyph(big.doseme, 32, 32)}<span>Döşeme</span>${tri()}</button></div>
          <h2>Döşeme</h2>
        </section>
        <section class="panel">
          <div class="row">
            <button class="cmd w48">${glyph(big.kiris, 32, 32)}<span>Kiriş</span></button>
            <button class="cmd w42">${glyph(big.kolon, 32, 32)}<span>Kolon</span></button>
            <button class="cmd w42">${glyph(big.perde, 32, 32)}<span>Perde</span></button>
            <button class="cmd w42">${glyph(big.grup, 32, 32)}<span>${"Perde\nGrubu"}</span></button>
            <span class="rule"></span><span class="stack"></span><span class="stack"></span>
          </div>
          <h2>Betonarme</h2>
        </section>
      </div>
      <div class="panels">
        <section class="panel cut">
          <div class="row">
            <div class="stack">
              ${glyph(page(4, 4, R), 17)}
              ${glyph([P("M1.500 1.500h14v10h-14zM4 4h9v5H4z", B, "#ddd"), page(7.500, 7.500, R)], 17)}
              ${glyph([P("M7 1v10M1 6h10M5 4h4v4H5z", B, B, 1.500), page(7.500, 7.500, R)], 17)}
            </div>
            <span class="w42"></span>
          </div>
          <h2>Deprem Yönetmeliği</h2>
        </section>
        ${this.led("Çelik", false)}${this.led("Kalıp\nplanı", true)}${this.led("Metraj", false)}
        <span class="filler"></span>
      </div>
    </div>`;
  }

  private dialog() {
    return html`<div class="dialog" role="dialog" aria-labelledby="dlg">
      <header>
        <h1 id="dlg">Statik Rapor Ayarları</h1>
        <button class="close" aria-label="Pencereyi kapat">${glyph(P("M3 3l10 10M13 3L3 13", "#000"))}</button>
      </header>
      <div class="content">
        <div class="main">
          <fieldset>
            <legend>Rapor seçimi :</legend>
            <div class="tree">
              <ul>
                ${this.groups.map((g, i) => html`<li>
                  <div class="node">
                    <button class="expander" aria-label=${g.name} aria-expanded=${g.open} @click=${() => this.toggleOpen(i)}>${glyph(P(g.open ? "M1 3.500h5" : "M1 3.500h5M3.500 1v5", "#3a5aa8"), 7, 7)}</button>
                    <label><input type="checkbox" class=${g.mark} ?checked=${g.mark === "on"} />${g.name}</label>
                  </div>
                  ${g.open ? html`<ul>${g.items.map((l) => html`<li class="kid"><label><input type="checkbox" ?checked=${l.on} />${l.name}</label></li>`)}</ul>` : ""}
                </li>`)}
              </ul>
              <div class="scroll">
                <button aria-label="Yukarı">${glyph(P("M1 6l3.500-3.500L8 6", "#505050", "none", 2), 9, 9)}</button>
                <div class="track"><div class="thumb"></div></div>
                <button aria-label="Aşağı">${glyph(P("M1 3l3.500 3.500L8 3", "#505050", "none", 2), 9, 9)}</button>
              </div>
            </div>
          </fieldset>
          <fieldset class="heading">
            <legend>Rapor başlığı :</legend>
            <div class="head">
              <div class="fields">
                <label for="dizayn">Dizayn</label><input class="text" id="dizayn" value="FERDİ ÖZKUL" />
                <label for="rev">Revizyon :</label><input class="text" id="rev" />
                <label for="tarih">Tarih :</label>
                <span class="date"><input id="tarih" value="17.03.2022" />${glyph([P("M1.500 1.500h9v11h-9z", "#778", "#e8e8f0"), P("M3 4.500h6M3 7h6M3 9.500h6M4.500 3v8M7.500 3v8", "#99a")], 12, 13)}${tri("#3a5a90")}</span>
              </div>
              <div class="logoctl"><span>Firma Logosu :</span><button class="push">Logoyu sil</button></div>
              <div class="logo">Firma Logosu Seçiniz</div>
            </div>
          </fieldset>
          <fieldset class="scope">
            <legend>Rapor kapsamı :</legend>
            <label><input type="radio" name="scope" />Tüm proje</label>
            <label><input type="radio" name="scope" />Aktif kat</label>
            <label><input type="radio" name="scope" checked />Seçili elemanlar</label>
          </fieldset>
          <fieldset class="site">
            <legend>Yapı bilgileri ve zemin grupları :</legend>
            <div class="sites">
              <label for="il">İl / İlçe :</label>
              <div class="split two"><input class="text" id="il" value="İZMİR" /><span>/</span><input class="text" aria-label="İlçe" value="ÇEŞME" /></div>
              <label for="amac">Kullanım Amacı :</label><input class="text" id="amac" value="KONUT" />
              <label for="pafta">Pafta / Ada / Parsel Numaraları :</label>
              <div class="split"><input class="text a92" id="pafta" value="23.H.III.C" /><span>/</span><input class="text a78" aria-label="Ada" value="261" /><span>/</span><input class="text a62" aria-label="Parsel" value="18" /></div>
            </div>
          </fieldset>
        </div>
        <div class="side">
          <div class="pair"><button class="push">Tamam</button><button class="push">İptal</button></div>
          <button class="push default">Rapor Oluştur</button>
          <button class="push">Kaydet</button>
          <button class="push">Yükle</button>
        </div>
      </div>
    </div>`;
  }

  private taskbar() {
    return html`<div class="taskbar">
      <button class="app" aria-label="Başlat">${glyph(P("M0 2l7-1v7H0zM8 1l8-1v8H8zM0 9h7v6l-7-1zM8 9h8v7l-8-1z", "none", "#fff"))}</button>
      <button class="app" aria-label="Ara">${glyph([C(10, 6, 5, "#fff"), P("M6.500 9.500L1 15", "#fff", "none", 1.500)])}</button>
      <button class="app" aria-label="Chrome">${glyph([C(8, 8, 7, "none", "#e04030"), P("M8 8L2 4.500a7 7 0 005 10.400z", "none", "#30a050"), P("M8 8h7a7 7 0 01-8 6.900z", "none", "#f8c820"), C(8, 8, 3.200, "#fff", "#3c78e8")])}</button>
      <button class="app" aria-label="CCleaner">${glyph([P("M13 4a6 6 0 100 8", "#d83020", "none", 4), P("M9 6l6-5M8 9l-6 5", "#6890b8", "none", 3)])}</button>
      <button class="app" aria-label="Hesap makinesi">${glyph([P("M2.500.5h11v15h-11z", "#88a", "#456a7a"), P("M4 2h8v3H4z", "none", "#50c8f0"), P("M4 7.500h8M4 10.500h8M4 13.500h8", "#dde", "none", 2), P("M6.500 6v10M9.500 6v10", "#456a7a")])}</button>
      <button class="app run" aria-label="Dosya gezgini">${glyph([P("M0 2h6l1 2h9v10H0z", "none", "#f8c848"), P("M4 14V9h8v5H9.500v-2h-3v2z", "none", "#3898e0")])}</button>
      <button class="app run" aria-label="Opera">${glyph([C(8, 8, 7, "#a8183c", "none", 2), svg`<ellipse cx="8" cy="8" rx="3.500" ry="6" fill="none" stroke="#a8183c" stroke-width="1.500"></ellipse>`])}</button>
      <button class="app active" aria-label="ideCAD">${glyph([P("M1 1h4v4H1z", "none", "#e02020"), P("M1 7h4v8H1zM6.500 1h3v14h-3zM11 1h4v3h-4zM11 6h4v4h-4zM11 12h4v3h-4z", "none", "#fff")])}</button>
      <div class="tray">
        ${glyph(P("M5.500 5.500h9v6h-9zM15 7v3M2.500 1v4M5.500 1v3M1 3h5v3H3.500v6", "#fff"), 18)}
        ${glyph([P("M2 14a12 12 0 0112-11M5 14a9 9 0 019-8M8 14a6 6 0 016-5", "#ddd"), P("M11 14a3 3 0 013-3v3z", "#fff", "#fff")])}
        ${glyph(P("M1 6h3l4-3.500v11L4 10H1zM10 6c1 1 1 3 0 4M12 4c2 2 2 6 0 8M14 2c3 3 3 9 0 12", "#fff"))}
        <time>17:27</time>
      </div>
    </div>`;
  }

  render() {
    return html`<div class="screen">
      ${this.top()}${this.ribbon()}
      <div class="tools"><div>${this.strip(toolsLeft)}</div><div>${this.strip(toolsRight, 11)}<span class="more"></span></div></div>
      <div class="body">
        ${this.bar(colLeft, "Düzen")}
        <div class="center">
          <div class="views">
            <svg viewBox="27 165 629 547" preserveAspectRatio="xMinYMin slice" role="img" aria-label="Kat planı">${plan()}</svg>
            <svg viewBox="656 165 630 547" preserveAspectRatio="xMaxYMin slice" role="img" aria-label="Üç boyutlu model">${model()}</svg>
            <div class="filters">
              <button aria-label="Süz">${glyph(P("M2 3h12l-5 6v4H7V9z", B, "#ccc"), 14)}</button>
              <button aria-label="N">${glyph(P("M4 14V2l8 12V2", B), 14)}</button>
              <button aria-label="Yukarı ok">${glyph(P("M2 13L8 3l6 10", B), 14)}</button>
            </div>
          </div>
          <div class="status"><span class="sel">S11 60/30</span><span class="msg">Hazır</span><span>tf / m</span><span>1 : 50</span><span>% 53</span></div>
        </div>
        ${this.bar(colA, "Biçim")}${this.bar(colB, "Taşıyıcı")}${this.bar(colC, "Rapor")}
      </div>
      ${this.taskbar()}
      ${this.dialog()}
    </div>`;
  }
}
